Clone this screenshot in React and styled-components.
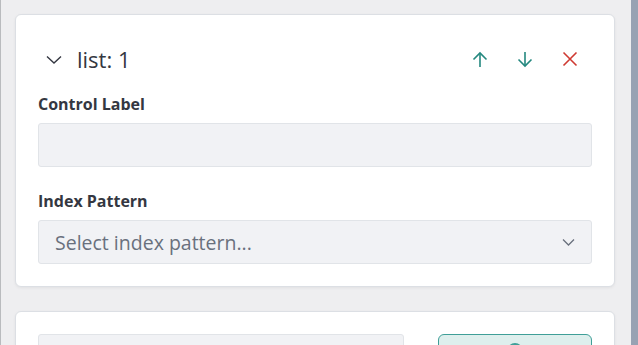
import React from "react";
import styled, { createGlobalStyle } from "styled-components";

const Global = createGlobalStyle`
  html, body { margin: 0; padding: 0; }
  body {
    background: #eeeef0;
    font-family: "Open Sans", "Noto Sans", sans-serif;
    overflow: hidden;
  }
`;

const Frame = styled.div`
  display: flex;
  width: 638px;
  height: 345px;
  overflow: hidden;
  border-left: 1px solid #b9bbbe;
  box-sizing: border-box;
`;

const Main = styled.div`
  flex: 1;
  display: flex;
  flex-direction: column;
  gap: 24px;
  padding: 14px 16px 0 14px;
  min-width: 0;
`;

const ScrollStrip = styled.div`
  width: 7px;
  background: #98a2b3;
  flex-shrink: 0;
`;

const Card = styled.section`
  background: #fff;
  border: 1px solid #dcdfe4;
  border-radius: 6px;
  box-shadow: 0 1px 3px rgba(0, 0, 0, 0.06);
  padding: ${(p) => p.$pad};
  display: flex;
  flex-direction: column;
  flex-shrink: 0;
`;

const Header = styled.div`
  display: flex;
  align-items: center;
  height: 32px;
  padding: 0 14px 0 8px;
`;

const Toggle = styled.span`
  display: flex;
  width: 16px;
  margin-right: 15px;
  color: #343741;
`;

const Title = styled.h2`
  margin: 0;
  flex: 1;
  font-size: 22px;
  font-weight: 400;
  color: #343741;
  letter-spacing: 0;
`;

const Actions = styled.div`
  display: flex;
  align-items: center;
  gap: 29px;
`;

const IconBtn = styled.button`
  border: 0;
  background: none;
  padding: 0;
  display: flex;
  color: ${(p) => p.$color};
  cursor: pointer;
`;

const Field = styled.div`
  display: flex;
  flex-direction: column;
  gap: 9px;
  margin-top: ${(p) => p.$top}px;
`;

const Label = styled.label`
  font-size: 16px;
  font-weight: 700;
  color: #343741;
  line-height: 20px;
`;

const Input = styled.div`
  height: 44px;
  box-sizing: border-box;
  background: #f1f2f5;
  border: 1px solid #e1e4e8;
  border-radius: 3px;
  display: flex;
  align-items: center;
  padding: 0 16px;
  width: ${(p) => p.$w || "auto"};
`;

const Placeholder = styled.span`
  flex: 1;
  font-size: 19.5px;
  color: #69707d;
`;

const Row = styled.div`
  display: flex;
  justify-content: space-between;
`;

const ApplyButton = styled.div`
  width: 154px;
  height: 44px;
  box-sizing: border-box;
  border: 1.5px solid #3f9f98;
  border-radius: 6px;
  background: #deefed;
  display: flex;
  justify-content: center;
  padding-top: 8px;
`;

const Ring = styled.span`
  width: 16px;
  height: 16px;
  border-radius: 50%;
  border: 2px solid #3f9f98;
  box-sizing: border-box;
`;

const Chevron = () => (
  <svg width="16" height="15" viewBox="0 0 16 15" fill="none" stroke="currentColor" strokeWidth="1.4">
    <path d="M1 4.5 L8 11 L15 4.5" />
  </svg>
);

const ArrowUp = () => (
  <svg width="16" height="17" viewBox="0 0 16 17" fill="none" stroke="currentColor" strokeWidth="1.6">
    <path d="M8 16 V2" />
    <path d="M1.5 8.5 L8 2 L14.5 8.5" />
  </svg>
);

const ArrowDown = () => (
  <svg width="16" height="17" viewBox="0 0 16 17" fill="none" stroke="currentColor" strokeWidth="1.6">
    <path d="M8 1 V15" />
    <path d="M1.5 8.5 L8 15 L14.5 8.5" />
  </svg>
);

const Cross = () => (
  <svg width="16" height="16" viewBox="0 0 16 16" fill="none" stroke="currentColor" strokeWidth="1.6">
    <path d="M1.5 1.5 L14.5 14.5 M14.5 1.5 L1.5 14.5" />
  </svg>
);

const SmallChevron = () => (
  <svg width="13" height="12" viewBox="0 0 13 12" fill="none" stroke="#69707d" strokeWidth="1.3">
    <path d="M1 3.5 L6.5 9 L12 3.5" />
  </svg>
);

export default function App() {
  return (
    <>
      <Global />
      <Frame>
        <Main>
          <Card $pad="28px 22px 22px 22px">
            <Header>
              <Toggle>
                <Chevron />
              </Toggle>
              <Title>list: 1</Title>
              <Actions>
                <IconBtn $color="#24887f" aria-label="Move up">
                  <ArrowUp />
                </IconBtn>
                <IconBtn $color="#24887f" aria-label="Move down">
                  <ArrowDown />
                </IconBtn>
                <IconBtn $color="#cf3a32" aria-label="Remove">
                  <Cross />
                </IconBtn>
              </Actions>
            </Header>
            <Field $top={19}>
              <Label>Control Label</Label>
              <Input />
            </Field>
            <Field $top={24}>
              <Label>Index Pattern</Label>
              <Input>
                <Placeholder>Select index pattern...</Placeholder>
                <SmallChevron />
              </Input>
            </Field>
          </Card>
          <Card $pad="22px 22px 22px 22px">
            <Row>
              <Input $w="366px" />
              <ApplyButton>
                <Ring />
              </ApplyButton>
            </Row>
          </Card>
        </Main>
        <ScrollStrip />
      </Frame>
    </>
  );
}
